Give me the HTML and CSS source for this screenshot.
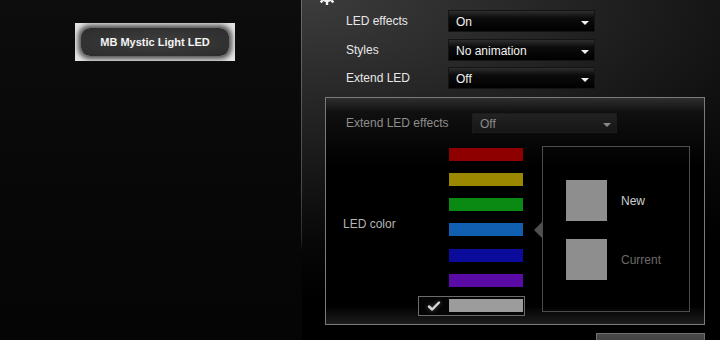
FILE: index.html
```html
<!DOCTYPE html>
<html lang="en">
<head>
    <meta charset="UTF-8">
    <meta name="viewport" content="width=device-width, initial-scale=1.0">
    <title>Mystic Light</title>
    <link rel="stylesheet" href="styles.css">
</head>
<body>
<div class="app">
    <aside class="sidebar">
        <div class="device-btn"><span>MB Mystic Light LED</span></div>
    </aside>
    <div class="divider"></div>

    <main class="main">
        <div class="gear">
            <svg width="20" height="20" viewBox="0 0 20 20">
                <g fill="none" stroke="#f2f2f2" stroke-width="2.4">
                    <circle cx="10" cy="10" r="5"/>
                    <path d="M10 1v3M10 16v3M1 10h3M16 10h3M3.6 3.6l2.1 2.1M14.3 14.3l2.1 2.1M3.6 16.4l2.1-2.1M14.3 5.7l2.1-2.1"/>
                </g>
            </svg>
        </div>

        <div class="settings">
            <div class="row">
                <span class="label">LED effects</span>
                <div class="select"><span>On</span><i class="caret"></i></div>
            </div>
            <div class="row">
                <span class="label">Styles</span>
                <div class="select"><span>No animation</span><i class="caret"></i></div>
            </div>
            <div class="row">
                <span class="label">Extend LED</span>
                <div class="select"><span>Off</span><i class="caret"></i></div>
            </div>
        </div>

        <section class="panel">
            <div class="row row-ext">
                <span class="label">Extend LED effects</span>
                <div class="select select-off"><span>Off</span><i class="caret"></i></div>
            </div>

            <div class="color-area">
                <div class="color-label">LED color</div>
                <ul class="swatches">
                    <li><span class="bar red"></span></li>
                    <li><span class="bar yellow"></span></li>
                    <li><span class="bar green"></span></li>
                    <li><span class="bar blue"></span></li>
                    <li><span class="bar navy"></span></li>
                    <li><span class="bar purple"></span></li>
                    <li class="selected">
                        <svg class="check" width="14" height="12" viewBox="0 0 14 12">
                            <path d="M2 6.5l3.2 3L12 2.5" fill="none" stroke="#d8d8d8" stroke-width="2.4" stroke-linecap="round" stroke-linejoin="round"/>
                        </svg>
                        <span class="bar grey"></span>
                    </li>
                </ul>
                <div class="preview">
                    <div class="preview-row">
                        <span class="chip"></span><span class="new">New</span>
                    </div>
                    <div class="preview-row">
                        <span class="chip"></span><span class="current">Current</span>
                    </div>
                </div>
            </div>
        </section>

        <div class="apply-btn"></div>
    </main>
</div>
</body>
</html>
```

FILE: styles.css
```css
body {
    margin: 0;
    height: 340px;
    overflow: hidden;
    background-color: #050505;
    font-family: "Liberation Sans", Arial, sans-serif;
    font-size: 12px;
    color: #e6e6e6;
}
.app {
    display: flex;
    height: 340px;
}

/* Lista de dispositivos */
.sidebar {
    width: 301px;
    padding: 23px 0 0 75px;
    box-sizing: border-box;
    background: linear-gradient(#0d0d0d, #070707 60%, #050505);
}
.device-btn {
    width: 160px;
    height: 38px;
    box-sizing: border-box;
    padding: 5px 6px;
    background-color: #e4e4e4;
}
.device-btn span {
    display: flex;
    align-items: center;
    justify-content: center;
    height: 100%;
    border-radius: 9px;
    background: radial-gradient(ellipse at center, #3e3e3e 0%, #333 60%, #2c2c2c 100%);
    box-shadow: 0 0 5px 3px rgba(45, 45, 45, 0.8);
    color: #f4f4f4;
    font-size: 11px;
    font-weight: bold;
}
.divider {
    width: 1px;
    background: linear-gradient(#6a6a6a, #4a4a4a 55%, #2a2a2a 70%, transparent 74%);
}

/* Area principal */
.main {
    flex: 1;
    background: radial-gradient(ellipse 700px 300px at 0 0, #3c3c3c 0%, #1f1f1f 45%, #080808 80%, #000 100%);
}
.gear {
    display: flow-root;
    height: 0;
    margin-left: 15px;
}
.gear svg {
    display: block;
    margin-top: -14px;
}
.settings {
    display: flex;
    flex-direction: column;
    gap: 6.5px;
    padding: 10px 0 0 44px;
}
.row {
    display: grid;
    grid-template-columns: 102px 147px;
    align-items: center;
    height: 22px;
}
.label {
    color: #e8e8e8;
}
.select {
    display: flex;
    align-items: center;
    justify-content: space-between;
    height: 22px;
    box-sizing: border-box;
    padding: 2px 5px 0 7px;
    background: linear-gradient(#2e2e2e 0, #0c0c0c 35%, #000 100%);
    border: 1px solid #141414;
    color: #f2f2f2;
}
.caret {
    width: 0;
    height: 0;
    margin-top: 2px;
    border-left: 4px solid transparent;
    border-right: 4px solid transparent;
    border-top: 4px solid #f0f0f0;
}

/* Painel de cores */
.panel {
    width: 380px;
    height: 228px;
    box-sizing: border-box;
    margin: 8px 0 0 23px;
    padding: 15px 0 0 20px;
    border: 1px solid #7a7a7a;
    background: linear-gradient(#2e2e2e 0, #101010 14px, #000 30%, #000 92%, #1c1c1c 100%);
}
.row-ext {
    grid-template-columns: 126px 145px;
    height: 20px;
}
.row-ext .label {
    color: #8e8e8e;
}
.select-off {
    height: 20px;
    background: linear-gradient(#222, #161616);
    border-color: #1c1c1c;
    color: #8a8a8a;
}
.select-off .caret {
    border-top-color: #8a8a8a;
}
.color-area {
    display: grid;
    grid-template-columns: 58px 107px 148px;
    column-gap: 17px;
    margin: 11px 0 0 -3px;
}
.color-label {
    margin-top: 73px;
    white-space: nowrap;
    color: #b4b4b4;
}
.swatches {
    list-style: none;
    margin: 0;
    padding: 0;
    display: flex;
    flex-direction: column;
    gap: 5.3px;
}
.swatches li {
    display: flex;
    align-items: center;
    justify-content: space-between;
    height: 20px;
    box-sizing: border-box;
    padding: 0 1px 0 8px;
    border: 1px solid transparent;
}
.swatches li .bar {
    margin-left: auto;
}
.swatches li.selected {
    border-color: #6c6c6c;
    background-color: #050505;
}
.check {
    filter: drop-shadow(0 0 2px #555);
}
.bar {
    width: 74px;
    height: 13px;
}
.red { background-color: #8e0000; }
.yellow { background-color: #9a8900; }
.green { background-color: #0a8a12; }
.blue { background-color: #105fb0; }
.navy { background-color: #0c0c9c; }
.purple { background-color: #5a0ba6; }
.grey { background-color: #9c9c9c; }

.preview {
    position: relative;
    height: 166px;
    box-sizing: border-box;
    margin-top: 2px;
    padding: 33px 0 0 23px;
    border: 1px solid #4c4c4c;
    display: flex;
    flex-direction: column;
    gap: 18px;
}
.preview::before {
    content: "";
    position: absolute;
    left: -9px;
    top: 75px;
    border-top: 8px solid transparent;
    border-bottom: 8px solid transparent;
    border-right: 8px solid #505050;
}
.preview-row {
    display: flex;
    align-items: center;
    gap: 14px;
}
.chip {
    width: 41px;
    height: 41px;
    background-color: #8e8e8e;
}
.new {
    color: #cfcfcf;
}
.current {
    color: #6a6a6a;
}

.apply-btn {
    width: 109px;
    height: 20px;
    box-sizing: border-box;
    margin: 8px 0 0 294px;
    border: 1px solid #6e6e6e;
    background: linear-gradient(#4a4a4a, #333);
}
```
